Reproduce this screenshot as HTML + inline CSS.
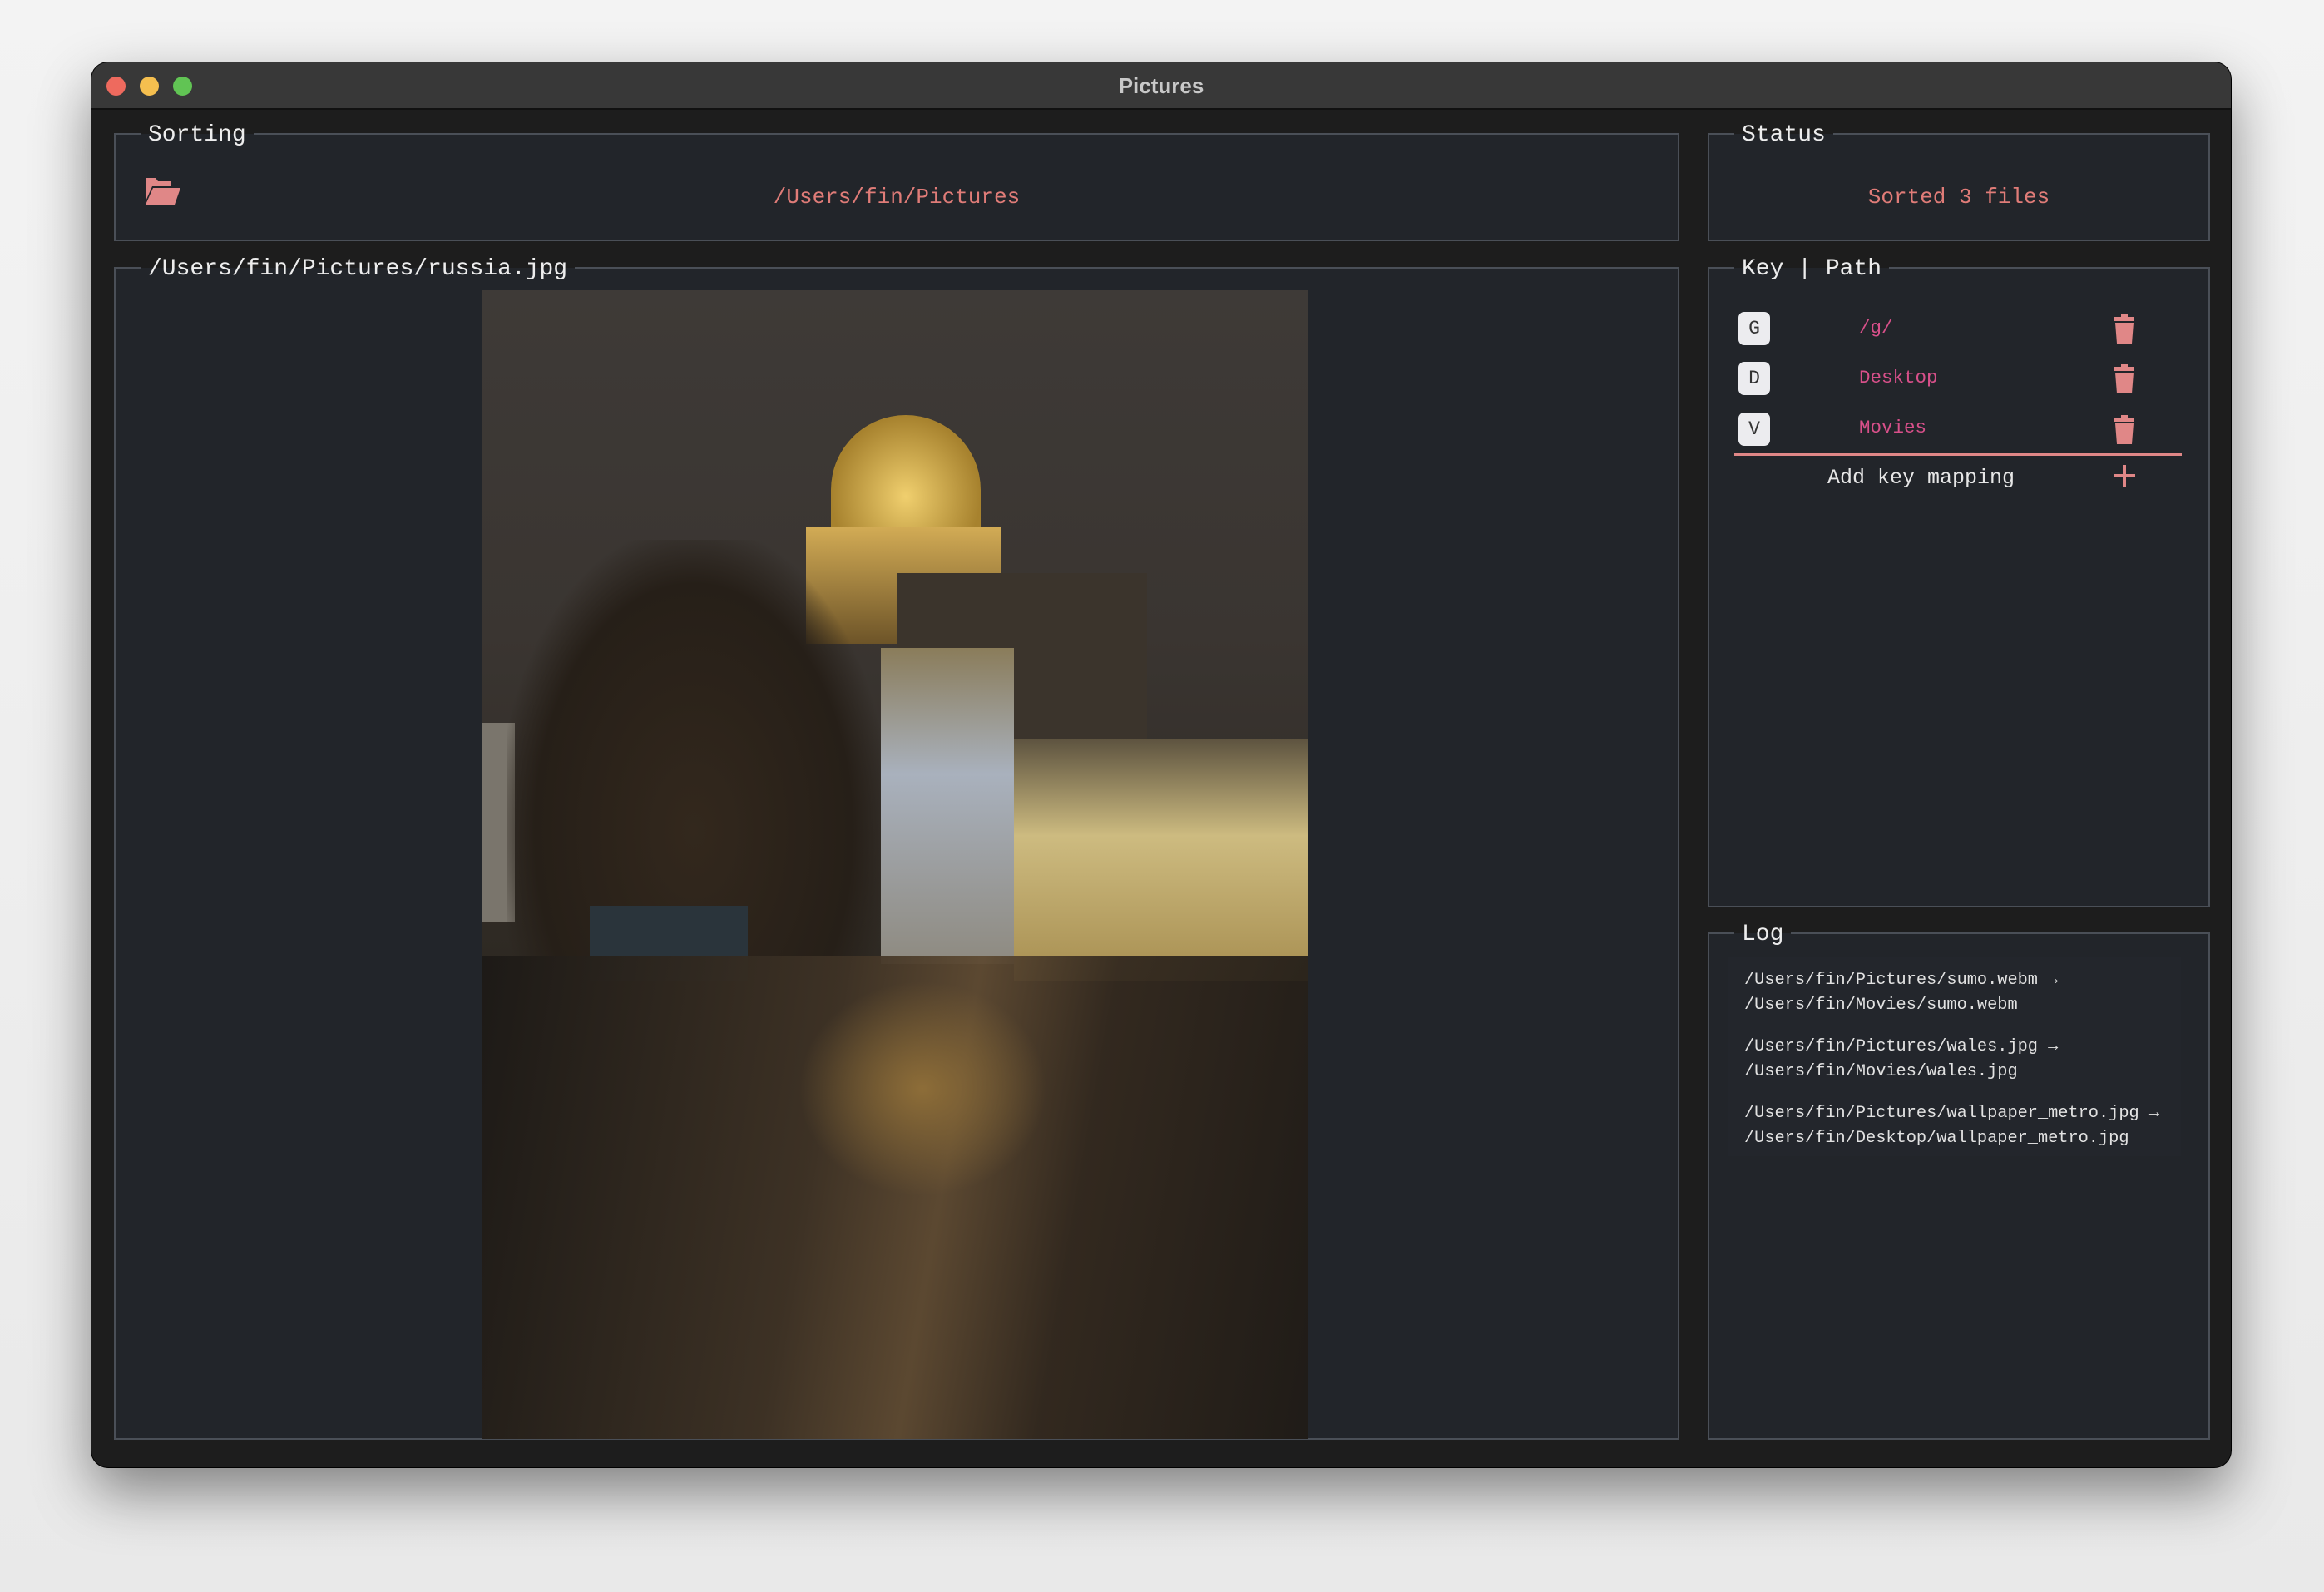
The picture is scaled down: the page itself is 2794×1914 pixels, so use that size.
<!DOCTYPE html>
<html><head><meta charset="utf-8"><style>
*{margin:0;padding:0;box-sizing:border-box}
body{width:2794px;height:1914px;background:linear-gradient(#f3f3f3,#e9e9e9);position:relative;overflow:hidden;font-family:"Liberation Mono",monospace}
.win{position:absolute;left:110px;top:75px;width:2572px;height:1689px;background:#1d1d1d;border-radius:20px;overflow:hidden;box-shadow:0 30px 70px rgba(0,0,0,.45),0 0 0 1px #000}
.tb{position:absolute;left:0;top:0;right:0;height:57px;background:#383838;border-bottom:2px solid #111}
.tb .t{position:absolute;left:0;right:0;top:13px;text-align:center;color:#c8c8c8;font:bold 26px "Liberation Sans",sans-serif}
.dot{position:absolute;top:92px;width:23px;height:23px;border-radius:50%}
.box{position:absolute;border:2px solid #4a4f57;background:#22252a}
.lbl{position:absolute;top:-18px;left:30px;padding:0 9px;background:linear-gradient(#1d1d1d 45%,#22252a 45%);color:#ededed;font-size:28px;line-height:38px;white-space:pre}
.abs{position:absolute;white-space:pre}
.badge{position:absolute;left:2090px;width:38px;height:40px;background:#ececef;border-radius:7px;color:#333;font-size:23px;line-height:40px;text-align:center}
.kp{position:absolute;left:2235px;color:#d8508a;font-size:22.5px}
.log{color:#e2e2e2;font-size:20.3px;line-height:30px}
</style></head><body>
<div class="win">
 <div class="tb"><div class="t">Pictures</div></div>
</div>
<div class="dot" style="left:128px;background:#ee6a5e"></div>
<div class="dot" style="left:168px;background:#f5bf4f"></div>
<div class="dot" style="left:208px;background:#61c454"></div>

<div class="box" style="left:137px;top:160px;width:1882px;height:130px"><div class="lbl">Sorting</div></div>
<svg class="abs" style="left:175px;top:212px" width="42" height="34" viewBox="0 0 42 34"><path d="M0 2h12l3 4h16v6H8L0 30z" fill="#e08787"/><path d="M9 14h33l-7 20H0z" fill="#e08787"/></svg>
<div class="abs" style="left:0;width:2156px;text-align:center;top:222px;color:#e07c78;font-size:26px">/Users/fin/Pictures</div>

<div class="box" style="left:137px;top:321px;width:1882px;height:1410px"><div class="lbl">/Users/fin/Pictures/russia.jpg</div></div>
<div class="abs" style="left:579px;top:349px;width:994px;height:1381px;overflow:hidden;background:linear-gradient(#3e3a37 0%,#3a3531 30%,#332e29 48%,#2c2720 62%,#2a241d 100%)">
 <div class="abs" style="left:420px;top:150px;width:180px;height:140px;border-radius:90px 90px 0 0;background:radial-gradient(ellipse at 50% 70%,#f0cf6e,#a7822e 70%)"></div>
 <div class="abs" style="left:390px;top:285px;width:235px;height:140px;background:linear-gradient(#d2ab55,#6d5428)"></div>
 <div class="abs" style="left:500px;top:340px;width:300px;height:470px;background:#3b342c"></div>
 <div class="abs" style="left:480px;top:430px;width:160px;height:380px;background:linear-gradient(#8a7c5a,#a9b1bd 40%,#8e8a80)"></div>
 <div class="abs" style="left:640px;top:540px;width:354px;height:290px;background:linear-gradient(#5e5440,#cdbb80 40%,#a78e50)"></div>
 <div class="abs" style="left:0;top:520px;width:40px;height:240px;background:#7a756c"></div>
 <div class="abs" style="left:30px;top:300px;width:450px;height:500px;background:radial-gradient(ellipse at 50% 70%,#33281d,#261f18 60%,transparent 75%)"></div>
 <div class="abs" style="left:130px;top:740px;width:190px;height:90px;background:#2a343b"></div>
 <div class="abs" style="left:0;top:800px;width:994px;height:581px;background:linear-gradient(100deg,#1c1916 0%,#3e3225 40%,#5e4a32 55%,#33291f 70%,#1f1b17 100%);opacity:.95"></div>
 <div class="abs" style="left:380px;top:830px;width:300px;height:260px;background:radial-gradient(ellipse,#8d6d38,transparent 70%)"></div>
</div>

<div class="box" style="left:2053px;top:160px;width:604px;height:130px"><div class="lbl">Status</div></div>
<div class="abs" style="left:2053px;width:604px;text-align:center;top:222px;color:#e07c78;font-size:26px">Sorted 3 files</div>

<div class="box" style="left:2053px;top:321px;width:604px;height:770px"><div class="lbl">Key | Path</div></div>
<div class="badge" style="top:375px">G</div>
<div class="badge" style="top:435px">D</div>
<div class="badge" style="top:496px">V</div>
<div class="kp" style="top:381px">/g/</div>
<div class="kp" style="top:441px">Desktop</div>
<div class="kp" style="top:501px">Movies</div>
<svg class="abs" style="left:2541px;top:378px" width="26" height="36" viewBox="0 0 26 36"><path d="M9 0h8v3h8v5H1V3h8z" fill="#e08787"/><path d="M2 10h22l-2 25H4z" fill="#e08787"/></svg>
<svg class="abs" style="left:2541px;top:438px" width="26" height="36" viewBox="0 0 26 36"><path d="M9 0h8v3h8v5H1V3h8z" fill="#e08787"/><path d="M2 10h22l-2 25H4z" fill="#e08787"/></svg>
<svg class="abs" style="left:2541px;top:499px" width="26" height="36" viewBox="0 0 26 36"><path d="M9 0h8v3h8v5H1V3h8z" fill="#e08787"/><path d="M2 10h22l-2 25H4z" fill="#e08787"/></svg>
<div class="abs" style="left:2085px;top:545px;width:538px;height:3px;background:#e08787"></div>
<div class="abs" style="left:2197px;top:560px;color:#e6e6e6;font-size:25px">Add key mapping</div>
<svg class="abs" style="left:2541px;top:559px" width="26" height="26" viewBox="0 0 26 26"><path d="M13 0v26M0 13h26" stroke="#e08787" stroke-width="4"/></svg>

<div class="box" style="left:2053px;top:1121px;width:604px;height:610px"><div class="lbl">Log</div></div>
<div class="abs" style="left:2077px;top:1150px;width:545px;height:240px;background:#23262c"></div>
<div class="abs log" style="left:2097px;top:1164px">/Users/fin/Pictures/sumo.webm →
/Users/fin/Movies/sumo.webm</div>
<div class="abs log" style="left:2097px;top:1244px">/Users/fin/Pictures/wales.jpg →
/Users/fin/Movies/wales.jpg</div>
<div class="abs log" style="left:2097px;top:1324px">/Users/fin/Pictures/wallpaper_metro.jpg →
/Users/fin/Desktop/wallpaper_metro.jpg</div>
</body></html>
